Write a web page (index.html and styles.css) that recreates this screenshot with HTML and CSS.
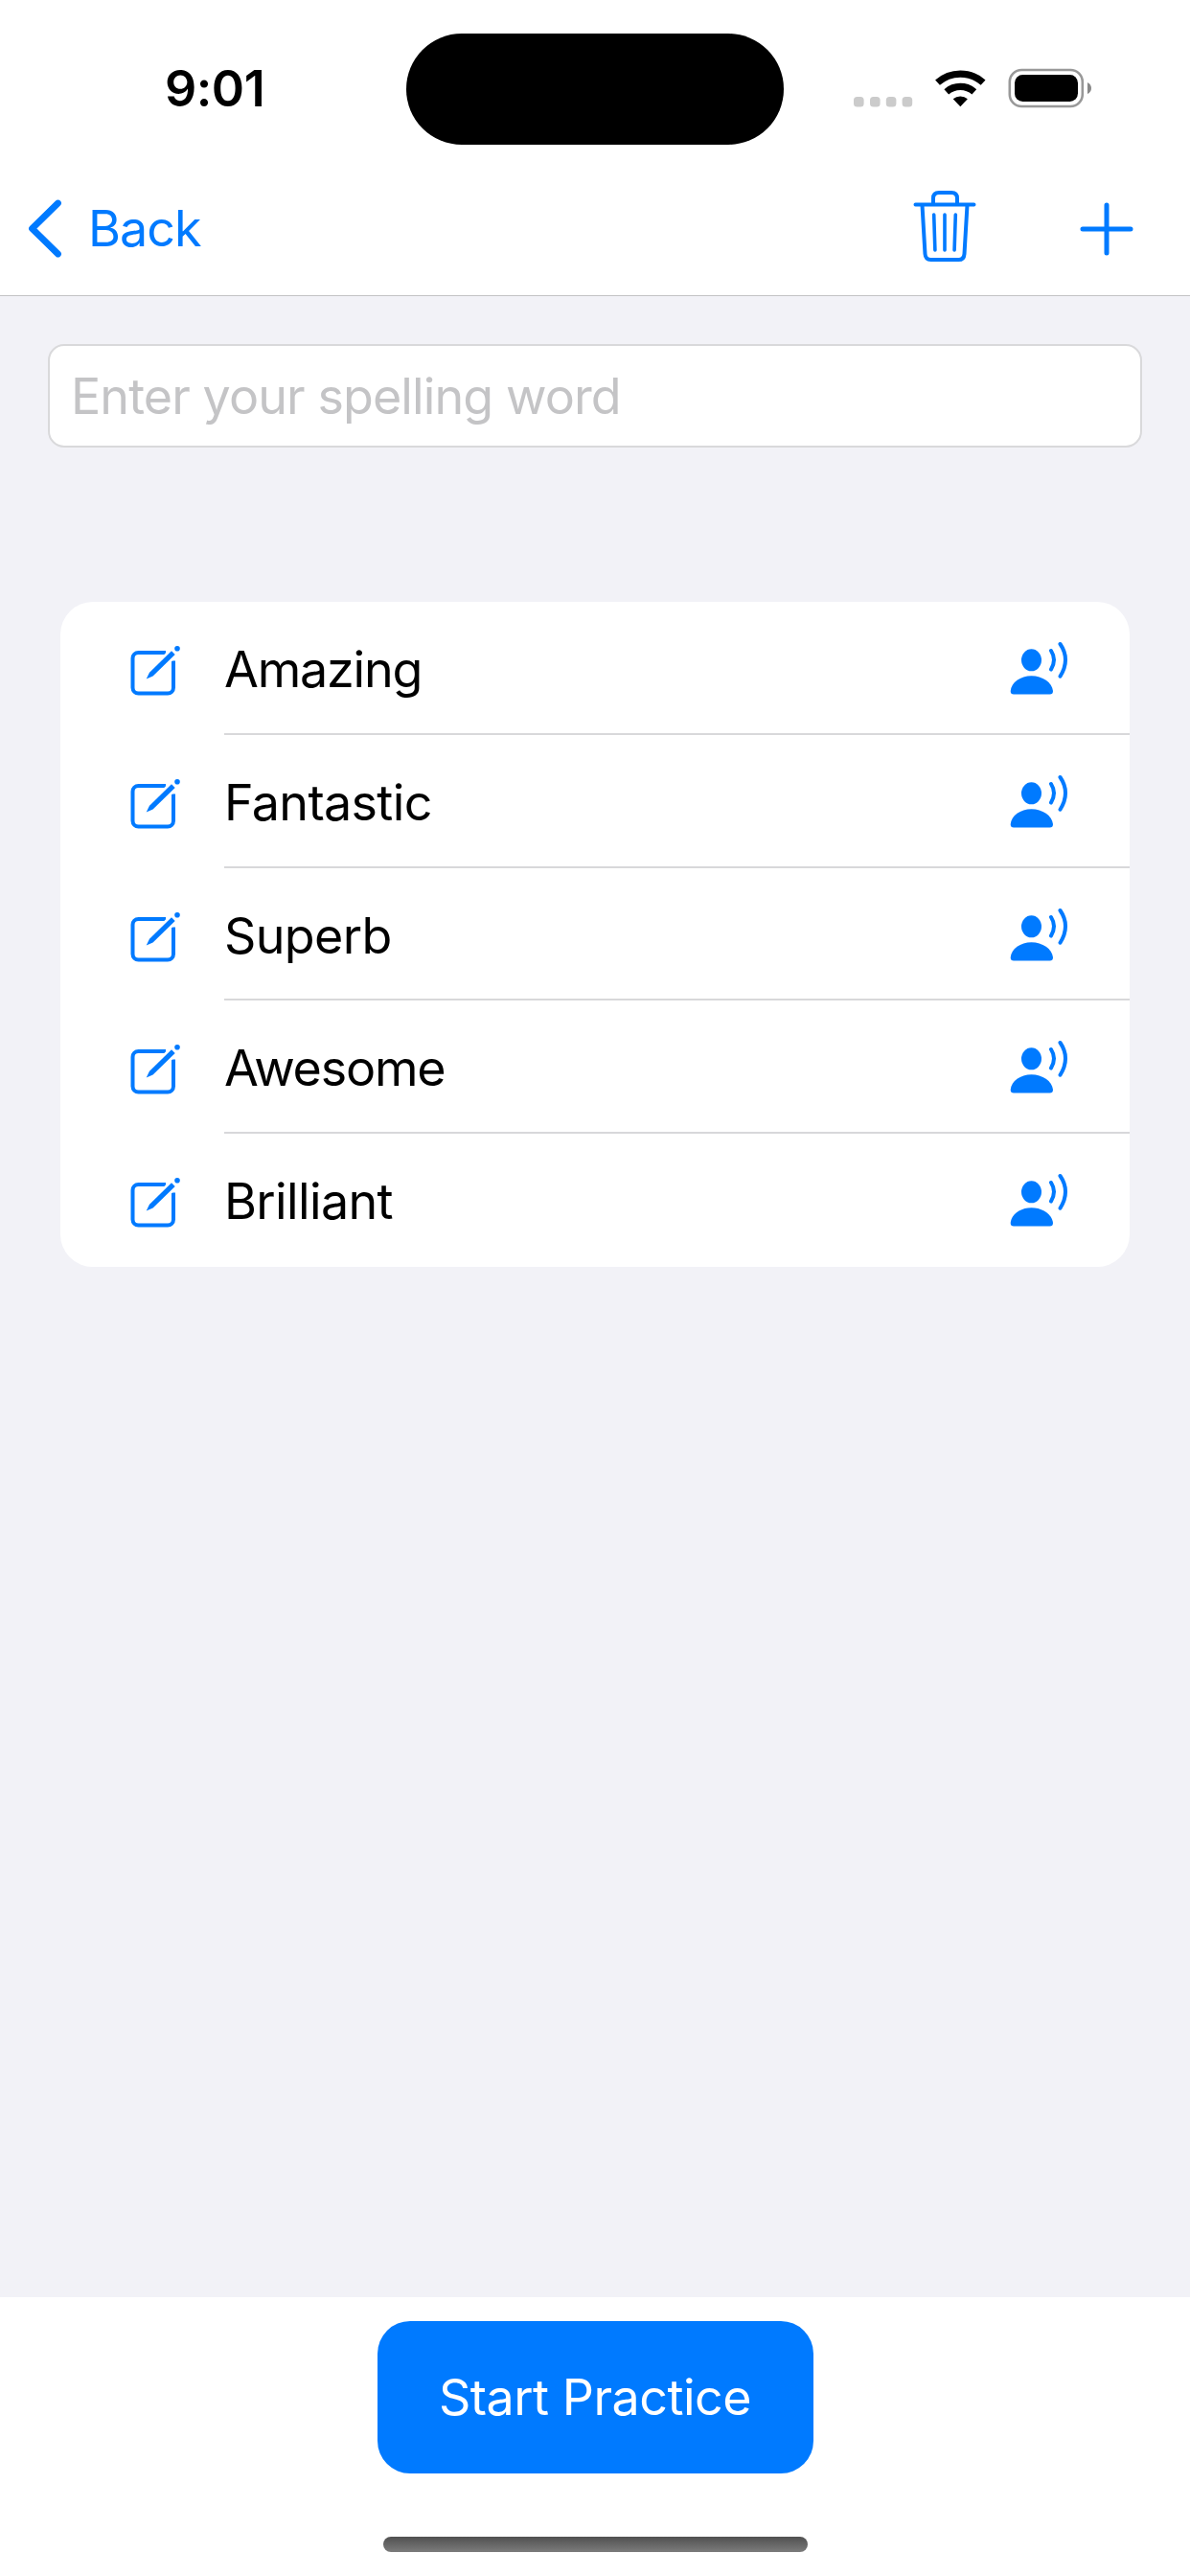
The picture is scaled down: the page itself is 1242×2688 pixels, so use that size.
FILE: index.html
```html
<!DOCTYPE html>
<html lang="en">
<head>
<meta charset="utf-8">
<title>Spelling Words</title>
<link rel="stylesheet" href="styles.css">
</head>
<body>
<svg class="defs" width="0" height="0" aria-hidden="true">
  <symbol id="edit" viewBox="0 0 60 60">
    <path d="M43 11H14.500a6 6 0 0 0-6 6v30.500a6 6 0 0 0 6 6h30.500a6 6 0 0 0 6-6V19.500" fill="none" stroke="currentColor" stroke-width="4"/>
    <path d="M23 38.500l3.500-7.500L50.500 7.500l4 4L30.500 35z" fill="#fff" stroke="#fff" stroke-width="5"/>
    <path d="M22.700 38.600l3.300-6.800L49 9.300l3.700 3.700L29.600 35.600z" fill="currentColor"/>
    <circle cx="55" cy="6.800" r="2.800" fill="currentColor"/>
  </symbol>
  <symbol id="speak" viewBox="0 0 66 60">
    <ellipse cx="26.500" cy="20.800" rx="10.500" ry="11.500" fill="currentColor"/>
    <path d="M8 56.500q-3.300 0-3.300-3.500C5.500 44 15 37.200 26.500 37.200S48 44 49 53q0 3.500-3.300 3.500z" fill="currentColor"/>
    <path d="M47 11q6 9.300 0 19.600M56.500 4q11 16 0 33.700" fill="none" stroke="currentColor" stroke-width="4" stroke-linecap="round"/>
  </symbol>
</svg>
<header class="top">
  <div class="status">
    <div class="time">9:01</div>
    <div class="island"></div>
    <svg class="indicators" width="252" height="44" viewBox="0 0 252 44">
      <g fill="#cbcbcb"><rect x="3" y="31" width="10.600" height="10.600" rx="3.500"/><rect x="20" y="31" width="10.600" height="10.600" rx="3.500"/><rect x="36.800" y="31" width="10.600" height="10.600" rx="3.500"/><rect x="53.600" y="31" width="10.600" height="10.600" rx="3.500"/></g>
      <g fill="none" stroke="#000" stroke-width="7.200"><path d="M90.500 16.200a35.500 35.500 0 0 1 47.600 0"/><path d="M99.800 25.900a22 22 0 0 1 29 0"/></g>
      <path d="M114.300 41.300l-7.600-8a11.500 11.500 0 0 1 15.200 0z"/>
      <rect x="165.800" y="3" width="76" height="38" rx="12.500" fill="none" stroke="#999" stroke-width="2.600"/>
      <rect x="171" y="8" width="66" height="28" rx="8.500"/>
      <path d="M247 16q4 2 4 6t-4 6z" fill="#888"/>
    </svg>
  </div>
  <nav class="nav">
    <div class="back">
      <svg width="40" height="66" viewBox="0 0 40 66"><path d="M32.500 7L5.500 33.500L32.500 60" fill="none" stroke="currentColor" stroke-width="6.800" stroke-linecap="round" stroke-linejoin="round"/></svg>
      <span>Back</span>
    </div>
    <div class="actions">
      <svg width="68" height="80" viewBox="0 0 68 80" fill="none" stroke="currentColor" stroke-width="4" stroke-linecap="round"><path d="M3.500 17.500h61M22 17V11q0-6 6-6h13q6 0 6 6v6M10.500 18l3 51q.4 6 6 6h29q5.600 0 6-6l3-51"/><path d="M22.700 28l1.200 37M34 28v37M45.300 28l-1.200 37" stroke-width="3.600"/></svg>
      <svg width="60" height="60" viewBox="0 0 60 60"><path d="M30 5v50M5 30h50" stroke="currentColor" stroke-width="5" stroke-linecap="round"/></svg>
    </div>
  </nav>
</header>
<main class="content">
  <input class="field" type="text" placeholder="Enter your spelling word">
  <ul class="words">
    <li class="row"><svg class="edit"><use href="#edit"/></svg><div class="cell"><span class="tight">Amazing</span><svg class="speak"><use href="#speak"/></svg></div></li>
    <li class="row"><svg class="edit"><use href="#edit"/></svg><div class="cell"><span>Fantastic</span><svg class="speak"><use href="#speak"/></svg></div></li>
    <li class="row"><svg class="edit"><use href="#edit"/></svg><div class="cell"><span>Superb</span><svg class="speak"><use href="#speak"/></svg></div></li>
    <li class="row"><svg class="edit"><use href="#edit"/></svg><div class="cell"><span class="tight">Awesome</span><svg class="speak"><use href="#speak"/></svg></div></li>
    <li class="row"><svg class="edit"><use href="#edit"/></svg><div class="cell"><span>Brilliant</span><svg class="speak"><use href="#speak"/></svg></div></li>
  </ul>
</main>
<footer class="bottom">
  <button class="start">Start Practice</button>
  <div class="home"></div>
</footer>
</body>
</html>
```
FILE: styles.css
```css
* { box-sizing: border-box; }
body {
  margin: 0;
  width: 1242px;
  height: 2688px;
  display: flex;
  flex-direction: column;
  background: #fff;
  color: #000;
  font: 400 52px/62px Inter, "Liberation Sans", sans-serif;
}
svg { display: block; flex: none; }
.defs { display: none; }
.top { height: 309px; border-bottom: 1.500px solid #c3c3c5; }
.status {
  height: 184px;
  display: grid;
  grid-template-columns: 424px 394px 1fr;
  align-items: start;
}
.time { padding: 62px 0 0 172px; font-weight: 600; letter-spacing: -.5px; }
.island { margin-top: 35px; height: 116px; border-radius: 58px; background: #000; }
.indicators { margin: 70px 0 0 70px; }
.nav { height: 124px; display: flex; justify-content: space-between; color: #007aff; }
.back { display: flex; align-items: flex-start; padding: 21px 0 0 28px; gap: 24px; }
.back span { padding-top: 3px; letter-spacing: -1px; }
.actions { display: flex; gap: 105px; padding: 12px 57px 0 0; }
.actions svg + svg { margin-top: 13px; }
.content { flex: 1; background: #f2f2f7; padding: 50px 50px 0; }
.field {
  display: block;
  width: 1142px;
  height: 108px;
  padding: 0 22px;
  border: 2px solid #d9d9db;
  border-radius: 17px;
  background: #fff;
  font: inherit;
  letter-spacing: -.9px;
}
.field::placeholder { color: #c4c4c6; opacity: 1; }
.words {
  list-style: none;
  margin: 161px 13px 0;
  padding: 0;
  border-radius: 34px;
  overflow: hidden;
  background: #fff;
}
.row { height: 138.800px; display: flex; padding-left: 67px; }
.edit { width: 60px; height: 60px; margin-top: 42px; color: #007aff; }
.cell {
  flex: 1;
  margin-left: 44px;
  padding: 40px 63px 0 0;
  display: flex;
  justify-content: space-between;
  border-bottom: 2px solid #d8d8da;
  letter-spacing: -.65px;
}
.row:last-child .cell { border-bottom: 0; }
.tight { letter-spacing: -1.200px; }
.speak { width: 66px; height: 60px; color: #007aff; }
.bottom { height: 291px; display: flex; flex-direction: column; align-items: center; padding-top: 25px; }
.start {
  width: 455px;
  height: 159px;
  border: 0;
  border-radius: 34px;
  background: #007aff;
  color: #fff;
  font: inherit;
  letter-spacing: -.5px;
}
.home { width: 443px; height: 16px; margin-top: 66px; border-radius: 8px; background: linear-gradient(#505050, #7c7c7c); }
```
